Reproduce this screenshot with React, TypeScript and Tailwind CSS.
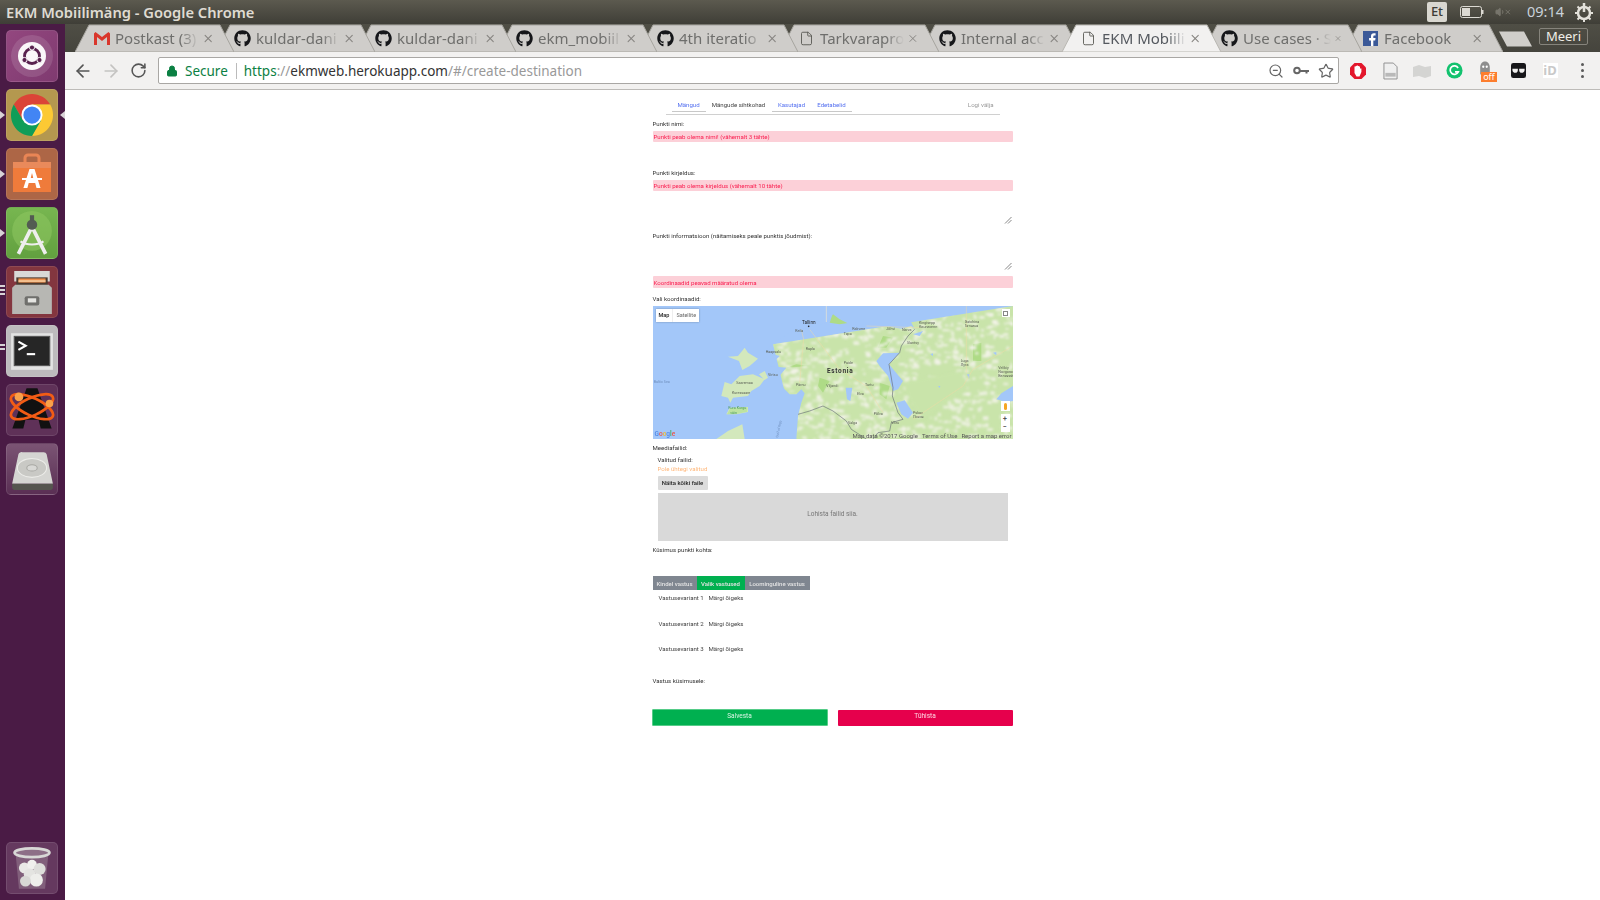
import { ArrowLeft, ArrowRight, RotateCw, Lock, ZoomOut, Star, File, Volume1, X } from 'lucide-react';
import { FaGithub } from 'react-icons/fa';
import type { ReactNode } from 'react';

// titles hold only the part that shows before the tab's fade
const tabs = [
  { title: 'Postkast (3)', icon: 'gmail' },
  { title: 'kuldar-dani', icon: 'github' },
  { title: 'kuldar-dani', icon: 'github' },
  { title: 'ekm_mobiil', icon: 'github' },
  { title: '4th iteratio', icon: 'github' },
  { title: 'Tarkvarapro', icon: 'file' },
  { title: 'Internal acc', icon: 'github' },
  { title: 'EKM Mobiili', icon: 'file', active: true },
  { title: 'Use cases · S', icon: 'github' },
  { title: 'Facebook', icon: 'facebook' },
];

function TabIcon({ kind }: { kind: string }) {
  if (kind === 'github') return <FaGithub className="w-[17px] h-[17px] text-[#16171a]" />;
  if (kind === 'file') return <File className="w-[15px] h-[17px] text-[#55554f]" strokeWidth={1.4} />;
  if (kind === 'facebook') {
    return (
      <svg viewBox="0 0 16 16" className="w-[15px] h-[15px]">
        <rect width="16" height="16" fill="#3b5998" />
        <path d="M11 16V10h2l.4-2.5H11V6c0-.8.3-1.2 1.2-1.2h1.2V2.5c-.5 0-1.1-.1-1.8-.1-1.900 0-3.100 1.100-3.100 3.200v1.900H6.500V10h2v6z" fill="#fff" />
      </svg>
    );
  }
  return (
    <svg viewBox="0 0 16 13" className="w-[16px] h-[13px]">
      <path d="M0 1.500 1.500 0 8 5 14.500 0 16 1.500V13h-3V5L8 9 3 5v8H0z" fill="#d9372c" />
    </svg>
  );
}

function Tab({ title, icon, active, index }: { title: string; icon: string; active?: boolean; index: number }) {
  return (
    <div
      className="relative w-[159px] h-[28px] shrink-0 -mr-[18px]"
      style={{ zIndex: active ? 30 : 20 - index }}
    >
      <svg viewBox="0 0 159 28" className="absolute inset-0 w-full h-full">
        <path
          d="M0 28 L14 1 H145 L159 28 Z"
          fill={active ? '#f2f1f0' : '#cfcdca'}
          stroke={active ? '#b8b6b1' : '#a6a49f'}
          strokeWidth="1"
        />
      </svg>
      <div className="relative flex items-center h-full pl-[18px] pr-[20px] pt-[1px]">
        <span className="w-[17px] flex justify-center shrink-0">
          <TabIcon kind={icon} />
        </span>
        <span
          className={`ml-[5px] w-[88px] whitespace-nowrap text-[15px] [mask-image:linear-gradient(to_right,black_78%,transparent)] ${active ? 'text-[#55595f]' : 'text-[#6e6e6c]'}`}
        >
          {title}
        </span>
        <X className="ml-[3px] w-[13px] h-[13px] text-[#85837f]" strokeWidth={2} />
      </div>
    </div>
  );
}

function ExtensionIcon({ kind }: { kind: string }) {
  switch (kind) {
    case 'opera':
      return (
        <svg viewBox="0 0 18 18" className="w-[18px] h-[18px]">
          <path d="M5.500 1h7L17 5.500v7L12.500 17h-7L1 12.500v-7z" fill="#e3172c" />
          <path d="M5.500 7.500V4.500h1.200v-.5h1V3.500h1.200v.5h1v.5h1.100v2h1.400v3.500L10.500 14.500H7.500L5.500 11z" fill="#fff" />
        </svg>
      );
    case 'doc':
      return (
        <svg viewBox="0 0 16 18" className="w-[15px] h-[18px]">
          <path d="M1 .5h10l4 4v13H1z" fill="#efefef" stroke="#8d8d8d" />
          <rect x="2.500" y="11" width="11" height="4" fill="#b9b9b9" />
        </svg>
      );
    case 'flag':
      return (
        <svg viewBox="0 0 18 14" className="w-[18px] h-[14px]">
          <path d="M0 3 6 1l6 2 6-1v10l-6 2-6-2-6 1z" fill="#d4d4d2" />
        </svg>
      );
    case 'grammarly':
      return (
        <svg viewBox="0 0 18 18" className="w-[17px] h-[17px]">
          <circle cx="9" cy="9" r="8.500" fill="#12c26e" />
          <path d="M12.800 6.300A4.500 4.500 0 1 0 13 10.500H9.500" fill="none" stroke="#fff" strokeWidth="1.800" />
        </svg>
      );
    case 'ghostery':
      return (
        <div className="relative w-[18px] h-[18px]">
          <svg viewBox="0 0 16 18" className="w-[14px] h-[17px] ml-[1px] -mt-[2px]">
            <path d="M8 1c3.500 0 5.500 3 5.500 7v8l-2-1.500L8 16l-3.500-1.500L2.500 16V8c0-4 2-7 5.500-7z" fill="#8d8d8d" />
            <circle cx="6" cy="7" r="1.300" fill="#fff" />
            <circle cx="10" cy="7" r="1.300" fill="#fff" />
          </svg>
          <span className="absolute left-[4px] top-[10px] w-[16px] h-[10px] bg-[#fd7e2e] text-white text-[9px] leading-[10px] text-center">off</span>
        </div>
      );
    case 'tampermonkey':
      return (
        <svg viewBox="0 0 16 16" className="w-[15px] h-[15px]">
          <rect width="16" height="16" rx="2.500" fill="#17171a" />
          <path d="M1.500 6h5.800v1.500c0 2-1 3-2.700 3s-3.100-1-3.100-3zM8.700 6h5.800v1.500c0 2-1.400 3-3.100 3s-2.700-1-2.700-3z" fill="#f2f1f0" />
        </svg>
      );
    case 'id':
      return <span className="w-[15px] h-[15px] bg-white text-[#c9c9c9] text-[13px] leading-[15px] font-bold text-center">iD</span>;
    default:
      return (
        <div className="flex flex-col gap-[3px]">
          <span className="w-[3px] h-[3px] rounded-full bg-[#5a5a5a]" />
          <span className="w-[3px] h-[3px] rounded-full bg-[#5a5a5a]" />
          <span className="w-[3px] h-[3px] rounded-full bg-[#5a5a5a]" />
        </div>
      );
  }
}

function Tile({ className, children, left = 0, right }: { className: string; children: ReactNode; left?: number; right?: boolean }) {
  return (
    <div className="relative w-full pl-[6px] shrink-0">
      {left === 1 && <span className="absolute left-0 top-[22px] border-y-[4px] border-y-transparent border-l-[5px] border-l-[#d8d3d6]" />}
      {left > 1 && (
        <span className="absolute left-0 top-[19px] flex flex-col gap-[2px]">
          {Array.from({ length: left }).map((_, i) => (
            <span key={i} className="w-[5px] h-[2px] bg-[#d8d3d6]" />
          ))}
        </span>
      )}
      {right && <span className="absolute right-0 top-[22px] border-y-[4px] border-y-transparent border-r-[5px] border-r-[#d8d3d6]" />}
      <div className={`w-[52px] h-[52px] rounded-[5px] flex items-center justify-center border border-white/10 ${className}`}>{children}</div>
    </div>
  );
}

function Launcher() {
  return (
    <aside className="w-[65px] shrink-0 bg-[#4a1b45] flex flex-col gap-[7px] pt-[6px] pb-[6px]">
      <Tile className="bg-gradient-to-br from-[#93477f] to-[#7f3a70]">
        <svg viewBox="0 0 48 48" className="w-[48px] h-[48px]">
          <circle cx="24" cy="24" r="21" fill="#fff" opacity="0.12" />
          <circle cx="24" cy="24" r="14" fill="#faf7f9" />
          <circle cx="24" cy="24" r="7.500" fill="none" stroke="#59224f" strokeWidth="2.800" />
          <circle cx="24" cy="15.500" r="2.600" fill="#59224f" stroke="#faf7f9" />
          <circle cx="16.500" cy="28" r="2.600" fill="#59224f" stroke="#faf7f9" />
          <circle cx="31.500" cy="28" r="2.600" fill="#59224f" stroke="#faf7f9" />
        </svg>
      </Tile>
      <Tile className="bg-[#b4984f]" left={1} right>
        <svg viewBox="0 0 48 48" className="w-[46px] h-[46px]">
          <path d="M24 13L43 13A22 22 0 0 0 5 13L14.500 29.500Z" fill="#db4437" />
          <path d="M33.500 29.500L24 46A22 22 0 0 0 43 13L24 13Z" fill="#fcc934" />
          <path d="M14.500 29.500L5 13A22 22 0 0 0 24 46L33.500 29.500Z" fill="#0f9d58" />
          <circle cx="24" cy="24" r="11" fill="#fff" />
          <circle cx="24" cy="24" r="9" fill="#4285f4" />
        </svg>
      </Tile>
      <Tile className="bg-[#ad6646]" left={1}>
        <svg viewBox="0 0 44 44" className="w-[44px] h-[44px]">
          <path d="M15 11V6a3 3 0 0 1 3-3h8a3 3 0 0 1 3 3v5" fill="none" stroke="#e98555" strokeWidth="3" />
          <path d="M3 10h38v30H3z" fill="#ef7b3b" />
          <path d="M3 10h38v6H3z" fill="#e98a5b" />
          <path d="M19.500 17h5l6 19h-4l-1.300-5h-6.500l-1.300 5h-4zM20.500 27h3l-1.500-6z" fill="#fff" />
          <rect x="12" y="26" width="20" height="2" fill="#fff" />
        </svg>
      </Tile>
      <Tile className="bg-gradient-to-b from-[#77b650] to-[#62a03f]" left={1}>
        <svg viewBox="0 0 44 44" className="w-[46px] h-[46px]">
          <circle cx="22" cy="20" r="19" fill="#8cc55f" opacity="0.6" />
          <path d="M21 18 9 42M23 18l12 24" stroke="#eee" strokeWidth="3.500" fill="none" />
          <path d="M11 30c6 4 16 4 22 0" stroke="#eee" strokeWidth="2" fill="none" />
          <circle cx="22" cy="14" r="5" fill="#535b52" />
          <rect x="20" y="5" width="4" height="5" fill="#535b52" />
        </svg>
      </Tile>
      <Tile className="bg-[#83363f]" left={3}>
        <svg viewBox="0 0 44 44" className="w-[46px] h-[46px]">
          <path d="M5 2h34v10H5z" fill="#d9d9d6" />
          <path d="M7 8h30v8H7z" fill="#4a3a30" />
          <path d="M9 9h26v4H9z" fill="#ee8e4a" />
          <rect x="9" y="11" width="26" height="1" fill="#f8e9c8" />
          <path d="M3 18 6 15h32l3 3v25H3z" fill="#b7b7b3" />
          <rect x="15" y="26" width="14" height="9" rx="2" fill="#6f6f6c" />
          <rect x="18" y="28" width="8" height="4" fill="#e4e4e1" />
        </svg>
      </Tile>
      <Tile className="bg-[#bdbbbd]" left={2}>
        <svg viewBox="0 0 44 44" className="w-[46px] h-[46px]">
          <rect x="2" y="5" width="40" height="35" fill="#e3e3e3" />
          <rect x="5" y="8" width="34" height="28" fill="#262626" stroke="#555" />
          <path d="M9 13l7 4-7 4" fill="none" stroke="#fff" strokeWidth="2" />
          <rect x="17" y="24" width="8" height="2" fill="#fff" />
        </svg>
      </Tile>
      <Tile className="bg-[#5f3158]">
        <svg viewBox="0 0 44 44" className="w-[48px] h-[48px]">
          <path d="M17 2h10l13 37h-10l-2-8H16l-2 8H4z" fill="#111" />
          <ellipse cx="22" cy="19" rx="21" ry="8" transform="rotate(25 22 19)" fill="none" stroke="#f25c15" strokeWidth="2.500" />
          <ellipse cx="22" cy="19" rx="21" ry="8" transform="rotate(-25 22 19)" fill="none" stroke="#f25c15" strokeWidth="2.500" />
          <circle cx="10" cy="10" r="4" fill="#f8a14a" />
          <circle cx="38" cy="16" r="3.500" fill="#f8a14a" />
        </svg>
      </Tile>
      <Tile className="bg-gradient-to-b from-[#7b5474] to-[#5a2f54]">
        <svg viewBox="0 0 44 44" className="w-[46px] h-[46px]">
          <path d="M13 6h20a3 3 0 0 1 3 2l6 28H3L9 8a3 3 0 0 1 4-2z" fill="#d5d5d2" />
          <ellipse cx="22" cy="21" rx="14" ry="9" fill="#c9c9c5" stroke="#ecece9" />
          <ellipse cx="22" cy="21" rx="5" ry="3" fill="#d8d8d5" stroke="#a7a7a3" />
          <path d="M3 36h39v4a2 2 0 0 1-2 2H5a2 2 0 0 1-2-2z" fill="#55554f" />
        </svg>
      </Tile>
      <div className="mt-auto">
        <Tile className="bg-[#65395f]">
          <svg viewBox="0 0 44 44" className="w-[48px] h-[48px]">
            <path d="M7 9h30l-3 32H10z" fill="#8d6f87" opacity="0.7" />
            <circle cx="15" cy="22" r="5" fill="#e9e9e6" />
            <circle cx="22" cy="19" r="4.500" fill="#f0f0ed" />
            <circle cx="29" cy="23" r="5.500" fill="#dededb" />
            <circle cx="20" cy="28" r="5.500" fill="#e4e4e1" />
            <circle cx="26" cy="33" r="6" fill="#eeeeeb" />
            <circle cx="16" cy="34" r="5" fill="#d8d8d5" />
            <ellipse cx="22" cy="8" rx="16" ry="4" fill="#8d6f87" stroke="#d8d8d6" strokeWidth="2.500" />
          </svg>
        </Tile>
      </div>
    </aside>
  );
}

function ResizeHandle() {
  return (
    <svg viewBox="0 0 8 8" className="w-[8px] h-[8px]">
      <path d="M1 7.500 7.500 1M4 7.500 7.500 4" stroke="#555" strokeWidth="0.700" />
    </svg>
  );
}

// pseudo random patches for the map texture
function makePatches() {
  const out: { x: number; y: number; w: number; h: number }[] = [];
  let s = 1234;
  const next = () => {
    s = (s * 1664525 + 1013904223) % 4294967296;
    return s / 4294967296;
  };
  for (let i = 0; i < 1100; i++) {
    out.push({ x: 190 + next() * 890, y: next() * 399, w: 4 + next() * 15, h: 3 + next() * 10 });
  }
  return out;
}

const patches = makePatches();

const SEA =
  'M0 0 H772 L770 40 L785 70 L775 60 L745 68 L710 62 L670 62 L640 55 L590 55 L560 40 L540 25 L520 50 L470 65 L420 75 L385 95 L360 115 L330 135 L380 150 L350 180 L400 185 L375 215 L385 240 L410 265 L430 265 L445 250 L455 262 L445 290 L435 330 L430 399 H0 Z';
const ISLANDS =
  'M225 152 L255 150 L275 125 L285 140 L315 158 L290 180 L268 192 L258 165 Z M205 270 L215 228 L235 235 L260 210 L300 205 L335 220 L320 240 L295 255 L285 270 L240 275 L232 290 L225 275 Z M318 205 L335 195 L345 215 L335 222 Z M220 325 L230 305 L285 303 L285 318 L250 325 Z M190 399 L225 375 L268 355 L275 399 Z';
const LAKES =
  'M670 165 L690 142 L740 140 L708 175 L750 225 L735 250 L720 255 L705 210 L680 180 Z M730 290 L755 283 L780 320 L765 338 L745 325 Z M578 245 L598 245 L592 285 L582 280 Z M1080 240 L1045 262 L1030 280 L1060 288 L1080 285 Z M780 85 L810 75 L800 90 Z M785 0 H805 L800 15 L790 15 Z M832 145 L840 142 L840 150 Z M855 240 L862 240 L860 246 Z M1020 140 L1030 138 L1030 148 Z M942 205 L950 205 L948 218 Z';

function MapCanvas() {
  return (
    <div className="relative h-[133px] overflow-hidden">
      <svg viewBox="0 0 1080 399" className="w-[360px] h-[133px] block">
        <defs>
          <filter id="soft" x="0" y="0" width="100%" height="100%">
            <feGaussianBlur stdDeviation="2.400" />
          </filter>
          <clipPath id="land">
            <path d={`${ISLANDS} M360 115 L1080 0 V399 H430 Z`} />
          </clipPath>
        </defs>
        <rect width="1080" height="399" fill="#a3c7f9" />
        <rect x="190" width="890" height="399" fill="#c9e4aa" clipPath="url(#land)" />
        <path d="M540 20 L590 50 L560 55 L530 50Z M690 90 L720 95 L700 125 L675 125Z M960 115 L985 110 L985 165 L960 165Z M430 175 L400 185 L470 180Z M500 215 L530 225 L510 260 L495 240Z M680 230 L710 240 L700 280 L680 265Z" fill="#aedb86" />
        <g filter="url(#soft)" clipPath="url(#land)">
          {patches.map((p, i) => (
            <rect key={i} x={p.x} y={p.y} width={p.w} height={p.h} fill="#f3f3ea" opacity="0.75" />
          ))}
          <path d="M750 230 L920 195 L950 240 L810 340 L770 280Z" fill="#c9e4aa" />
        </g>
        <path d={SEA} fill="#a3c7f9" />
        <path d={LAKES} fill="#a3c7f9" />
        <path d={ISLANDS} fill="#d3e8bc" />
        <path d="M222 325 L232 306 L283 304 L283 317 L250 324Z" fill="#bde3a0" />
        <path d="M520 0 V48" stroke="#efe6d2" strokeWidth="2" />
        <path d="M445 70 L452 100 L440 230 M940 0 L940 200 M780 340 L930 240 L960 190 L1080 120 M470 70 L560 190 L640 240 L690 320 M640 60 L800 65" fill="none" stroke="#f3d9a4" strokeWidth="1.500" opacity="0.9" />
        <path d="M785 70 L765 90 L745 120 L740 140 L708 175 L720 245 L718 270 L735 320 L750 340 L715 350 L710 375 L675 380 L660 399 M640 399 L595 370 L580 345 L540 315 L510 300 L470 315 L435 325" fill="none" stroke="#5f6670" strokeWidth="1.800" />
        <g fontFamily="Roboto, sans-serif" fill="#5a5f55" fontSize="11">
          <text x="447" y="53" fontSize="14" fill="#222">Tallinn</text>
          <text x="427" y="78">Keila</text>
          <text x="458" y="132">Rapla</text>
          <text x="338" y="142">Haapsalu</text>
          <text x="345" y="209">Virtsu</text>
          <text x="429" y="239">Pärnu</text>
          <text x="250" y="233">Saaremaa</text>
          <text x="237" y="263">Kuressaare</text>
          <text x="226" y="310" fill="#4a9b5e">Kura Kurgu</text>
          <text x="232" y="324" fill="#4a9b5e">väin</text>
          <text x="2" y="231" fill="#6f8fbe">Baltic Sea</text>
          <text x="572" y="86">Tapa</text>
          <text x="598" y="72">Rakvere</text>
          <text x="700" y="72">Jõhvi</text>
          <text x="747" y="75">Narva</text>
          <text x="762" y="113">Slantsy</text>
          <text x="798" y="55">Kingisepp</text>
          <text x="798" y="66">Кингисепп</text>
          <text x="935" y="50">Gatchina</text>
          <text x="935" y="63">Гатчина</text>
          <text x="923" y="168">Luga</text>
          <text x="923" y="180">Луга</text>
          <text x="1036" y="190">Velikiy</text>
          <text x="1036" y="201">Novgorod</text>
          <text x="1036" y="212">Великий</text>
          <text x="572" y="175">Paide</text>
          <text x="520" y="243">Viljandi</text>
          <text x="636" y="241">Tartu</text>
          <text x="612" y="268">Elva</text>
          <text x="662" y="328">Põlva</text>
          <text x="585" y="355">Valga</text>
          <text x="715" y="355">Võru</text>
          <text x="780" y="323">Pskov</text>
          <text x="780" y="336">Псков</text>
          <text x="375" y="395" fill="#6f8fbe" fontSize="10" transform="rotate(-78 375 395)">Gulf of Riga</text>
        </g>
        <text x="522" y="200" fontFamily="Roboto, sans-serif" fontSize="19.500" fontWeight="700" letterSpacing="2" fill="#333">Estonia</text>
        <circle cx="467" cy="61" r="2.500" fill="#222" />
      </svg>

      <div className="absolute left-[3px] top-[3px] h-[13px] flex items-center bg-white shadow-[0_0_2px_rgba(0,0,0,0.3)] text-[5.500px]">
        <span className="px-[3px] font-medium text-[#222]">Map</span>
        <span className="px-[3px] border-l border-[#eee] h-full flex items-center text-[#666]">Satellite</span>
      </div>
      <div className="absolute right-[3px] top-[3px] w-[8px] h-[8px] bg-white flex items-center justify-center">
        <span className="w-[5px] h-[5px] border border-dashed border-[#888]" />
      </div>
      <div className="absolute right-[3px] top-[95px] w-[9px] h-[10px] bg-white flex items-center justify-center">
        <span className="w-[3px] h-[7px] rounded-full bg-[#f5a623]" />
      </div>
      <div className="absolute right-[3px] top-[108px] w-[9px] h-[18px] bg-white flex flex-col items-center justify-center text-[7px] leading-[8px] text-[#555] font-bold">
        <span>+</span>
        <span>−</span>
      </div>
      <span className="absolute left-[2px] bottom-0 text-[6.500px] font-medium leading-[10px]">
        <span className="text-[#4f88e8]">G</span>
        <span className="text-[#e8574a]">o</span>
        <span className="text-[#f2b92c]">o</span>
        <span className="text-[#4f88e8]">g</span>
        <span className="text-[#3cab55]">l</span>
        <span className="text-[#e8574a]">e</span>
      </span>
      <div className="absolute right-[1px] bottom-0 h-[6px] flex gap-[4px] text-[6px] leading-[6px] text-[#555] whitespace-nowrap">
        <span>Map data ©2017 Google</span>
        <span>Terms of Use</span>
        <span>Report a map error</span>
      </div>
    </div>
  );
}

function Label({ children }: { children: ReactNode }) {
  return <div className="h-[14px] pb-[1px] flex items-center text-[6.100px] text-[#333]">{children}</div>;
}

function ErrorBar({ children, tall }: { children: ReactNode; tall?: boolean }) {
  return (
    <div className={`flex items-center px-[1px] rounded-[1px] bg-[#fcd0d8] text-[6.100px] text-[#fa1e50] ${tall ? 'h-[12px] pt-[1px]' : 'h-[11px]'}`}>
      {children}
    </div>
  );
}

const navItems = [
  { label: 'Mängud', w: 'w-[34px]', cls: 'text-[#5470f0] border-b border-[#c8c8c8]' },
  { label: 'Mängude sihtkohad', w: 'w-[66px]', cls: 'text-[#444]' },
  { label: 'Kasutajad', w: 'w-[40px]', cls: 'text-[#5470f0] border-b border-[#c8c8c8]' },
  { label: 'Edetabelid', w: 'w-[40px]', cls: 'text-[#5470f0] border-b border-[#c8c8c8]' },
];

function DestinationForm() {
  return (
    <div className="w-[360px] mx-auto font-['Roboto',sans-serif] blur-[0.3px]">
      <nav className="mx-[13px] h-[25px] pt-[8px] border-b border-[#d0d0d0] flex items-start">
        <div className="ml-[6px] flex">
          {navItems.map((item) => (
            <span key={item.label} className={`h-[14px] flex items-center justify-center text-[6.100px] ${item.w} ${item.cls}`}>
              {item.label}
            </span>
          ))}
        </div>
        <span className="ml-auto mr-[6px] h-[14px] pb-[1px] flex items-center text-[6.100px] text-[#999]">Logi välja</span>
      </nav>

      <div className="mt-[2px]">
        <Label>Punkti nimi:</Label>
      </div>
      <ErrorBar>Punkti peab olema nimi! (vähemalt 3 tähte)</ErrorBar>
      <div className="h-[24px]" />

      <Label>Punkti kirjeldus:</Label>
      <ErrorBar>Punkti peab olema kirjeldus (vähemalt 10 tähte)</ErrorBar>
      <div className="h-[34px] mb-[4px] flex justify-end items-end pb-[1px] pr-[1px]">
        <ResizeHandle />
      </div>

      <Label>Punkti informatsioon (näitamiseks peale punktis jõudmist):</Label>
      <div className="h-[28px] mb-[5px] flex justify-end items-end pb-[1px] pr-[1px]">
        <ResizeHandle />
      </div>

      <ErrorBar tall>Koordinaadid peavad määratud olema</ErrorBar>
      <div className="mt-[4px]">
        <Label>Vali koordinaadid:</Label>
      </div>
      <MapCanvas />

      <div className="mt-[2px]">
        <Label>Meediafailid:</Label>
      </div>
      <div className="pl-[5px] pr-[5px]">
        <div className="h-[10px] pb-[1px] flex items-center text-[6.100px] text-[#333]">Valitud failid:</div>
        <div className="h-[9px] pb-[1px] flex items-center text-[6.100px] text-[#ffb77a]">Pole ühtegi valitud</div>
        <button className="mt-[2px] w-[50px] h-[14px] pb-[1px] rounded-[1px] bg-[#dcdcdc] text-[6px] font-medium text-[#222] block">
          Näita kõiki faile
        </button>
        <div className="mt-[3px] h-[48px] pb-[5px] bg-[#d9d9d9] flex items-center justify-center text-[6.500px] text-[#777]">
          Lohista failid siia.
        </div>
      </div>

      <div className="mt-[2px]">
        <Label>Küsimus punkti kohta:</Label>
      </div>
      <div className="mt-[19px] flex h-[14px] w-[157px] text-[6px] font-medium text-[#e4e4e4]">
        <span className="w-[44px] flex items-center justify-center bg-[#7f8690]">Kindel vastus</span>
        <span className="w-[48px] flex items-center justify-center bg-[#00b050]">Valik vastused</span>
        <span className="w-[65px] flex items-center justify-center bg-[#7f8690]">Loominguline vastus</span>
      </div>

      <div className="mt-[1px] pl-[6px]">
        {[1, 2, 3].map((n) => (
          <div key={n} className={n === 1 ? 'h-[26px]' : 'h-[25px]'}>
            <div className="h-[14px] pb-[1px] flex items-center gap-[6px] text-[6.100px] text-[#444] whitespace-nowrap">
              <span className="w-[44px]">Vastusevariant {n}</span>
              <span>Märgi õigeks</span>
            </div>
          </div>
        ))}
      </div>

      <div className="mt-[7px]">
        <Label>Vastus küsimusele:</Label>
      </div>

      <div className="mt-[21px] flex justify-between">
        <button className="w-[176px] -ml-[1px] h-[17px] rounded-[1px] bg-[#00b050] border border-[#55cc88] text-[6.500px] text-[#d8f5e4] pb-[1px]">
          Salvesta
        </button>
        <button className="w-[175px] h-[16px] mt-[0.500px] rounded-[1px] bg-[#e6004c] text-[6.500px] text-[#ffd8e4] pb-[1px]">
          Tühista
        </button>
      </div>
    </div>
  );
}

export default function App() {
  return (
    <div className="w-[1600px] h-[900px] overflow-hidden flex flex-col bg-white font-['Noto_Sans',sans-serif]">
      <header className="h-[24px] shrink-0 bg-gradient-to-b from-[#5c5a4f] to-[#3f3e37] flex items-center pl-[6px]">
        <span className="text-[14.700px] font-semibold text-[#dfdbd2]">EKM Mobiilimäng - Google Chrome</span>
        <div className="ml-auto flex items-center">
          <span className="w-[20px] h-[20px] rounded-[2px] bg-[#d9d7d0] text-[#3d3c37] text-[13px] font-medium flex items-center justify-center">Et</span>
          <svg viewBox="0 0 24 12" className="ml-[13px] w-[24px] h-[12px]">
            <rect x="0.500" y="0.500" width="21" height="11" rx="2" fill="none" stroke="#dcdad3" />
            <rect x="2" y="2" width="8" height="8" fill="#dcdad3" />
            <rect x="22" y="4" width="1.500" height="4" fill="#dcdad3" />
          </svg>
          <div className="ml-[11px] w-[17px] flex items-center text-[#77756c]">
            <Volume1 className="w-[12px] h-[14px]" fill="#77756c" />
            <X className="w-[8px] h-[8px] -ml-[2px]" strokeWidth={3} />
          </div>
          <span className="ml-[15px] w-[38px] text-[14.500px] text-[#c9d2da]">09:14</span>
          <svg viewBox="0 0 22 22" className="ml-[8px] mr-[5px] w-[22px] h-[22px]">
            <circle cx="11" cy="12" r="6" fill="none" stroke="#e3e1da" strokeWidth="2.500" />
            <path d="M11 2v9" stroke="#e3e1da" strokeWidth="2.500" />
            <path d="M11 3v3M11 18v3M2 12h3M17 12h3M4.500 5.500l2 2M15.500 16.500l2 2M17.500 5.500l-2 2M6.500 16.500l-2 2" stroke="#e3e1da" strokeWidth="2" />
          </svg>
        </div>
      </header>

      <div className="flex-1 flex min-h-0">
        <Launcher />
        <div className="flex-1 min-w-0 flex flex-col">
          <div className="h-[28px] shrink-0 bg-gradient-to-b from-[#4f4e45] to-[#45443d] flex pl-[10px]">
            {tabs.map((tab, i) => (
              <Tab key={i} index={i} {...tab} />
            ))}
            <div className="ml-[14px] flex items-center">
              <svg viewBox="0 0 33 16" className="mt-[2px] w-[33px] h-[16px] shrink-0">
                <path d="M0 .5H25L33 15.500H8Z" fill="#d0ceca" />
              </svg>
              <span className="ml-[7px] -mt-[3px] w-[49px] h-[17px] rounded-[2px] border border-[#86847c] text-[13px] leading-[14px] text-[#f0eee8] text-center shrink-0">Meeri</span>
            </div>
          </div>

          <div className="h-[38px] shrink-0 bg-[#f2f1f0] border-b border-[#bdbbb8] flex items-center">
            <div className="w-[93px] pl-[8px] flex items-center text-[#555]">
              <ArrowLeft className="w-[20px] h-[20px]" strokeWidth={2} />
              <ArrowRight className="ml-[8px] w-[20px] h-[20px] text-[#c4c3c1]" strokeWidth={2} />
              <RotateCw className="ml-[9px] w-[17px] h-[17px]" strokeWidth={2.200} />
            </div>
            <div className="w-[1181px] h-[27px] rounded-[2px] bg-white border border-[#a9a7a4] flex items-center text-[13.500px]">
              <Lock className="ml-[7px] w-[12px] h-[14px] text-[#0b8043]" fill="#0b8043" strokeWidth={2} />
              <span className="ml-[7px] pt-[1px] text-[#0b8043]">Secure</span>
              <span className="ml-[8px] w-[1px] h-[16px] bg-[#bbb]" />
              <span className="ml-[7px] pt-[1px] whitespace-nowrap">
                <span className="text-[#0b8043]">https</span>
                <span className="text-[#999]">://</span>
                <span className="text-[#333]">ekmweb.herokuapp.com</span>
                <span className="text-[#999]">/#/create-destination</span>
              </span>
              <div className="ml-auto mr-[4px] flex items-center gap-[9px] text-[#666]">
                <ZoomOut className="w-[16px] h-[16px]" strokeWidth={1.800} />
                <svg viewBox="0 0 16 8" className="w-[16px] h-[9px]">
                  <circle cx="4" cy="4" r="2.800" fill="none" stroke="#666" strokeWidth="2" />
                  <path d="M7 3.500h9v2h-1.500v1.500h-2V5.500H7z" fill="#666" />
                </svg>
                <Star className="w-[16px] h-[16px]" strokeWidth={1.800} />
              </div>
            </div>
            <div className="ml-[3px] flex">
              {['opera', 'doc', 'flag', 'grammarly', 'ghostery', 'tampermonkey', 'id', 'menu'].map((kind) => (
                <span key={kind} className="w-[32px] flex items-center justify-center">
                  <ExtensionIcon kind={kind} />
                </span>
              ))}
            </div>
          </div>

          <main className="flex-1 min-h-0 bg-white">
            <DestinationForm />
          </main>
        </div>
      </div>
    </div>
  );
}
